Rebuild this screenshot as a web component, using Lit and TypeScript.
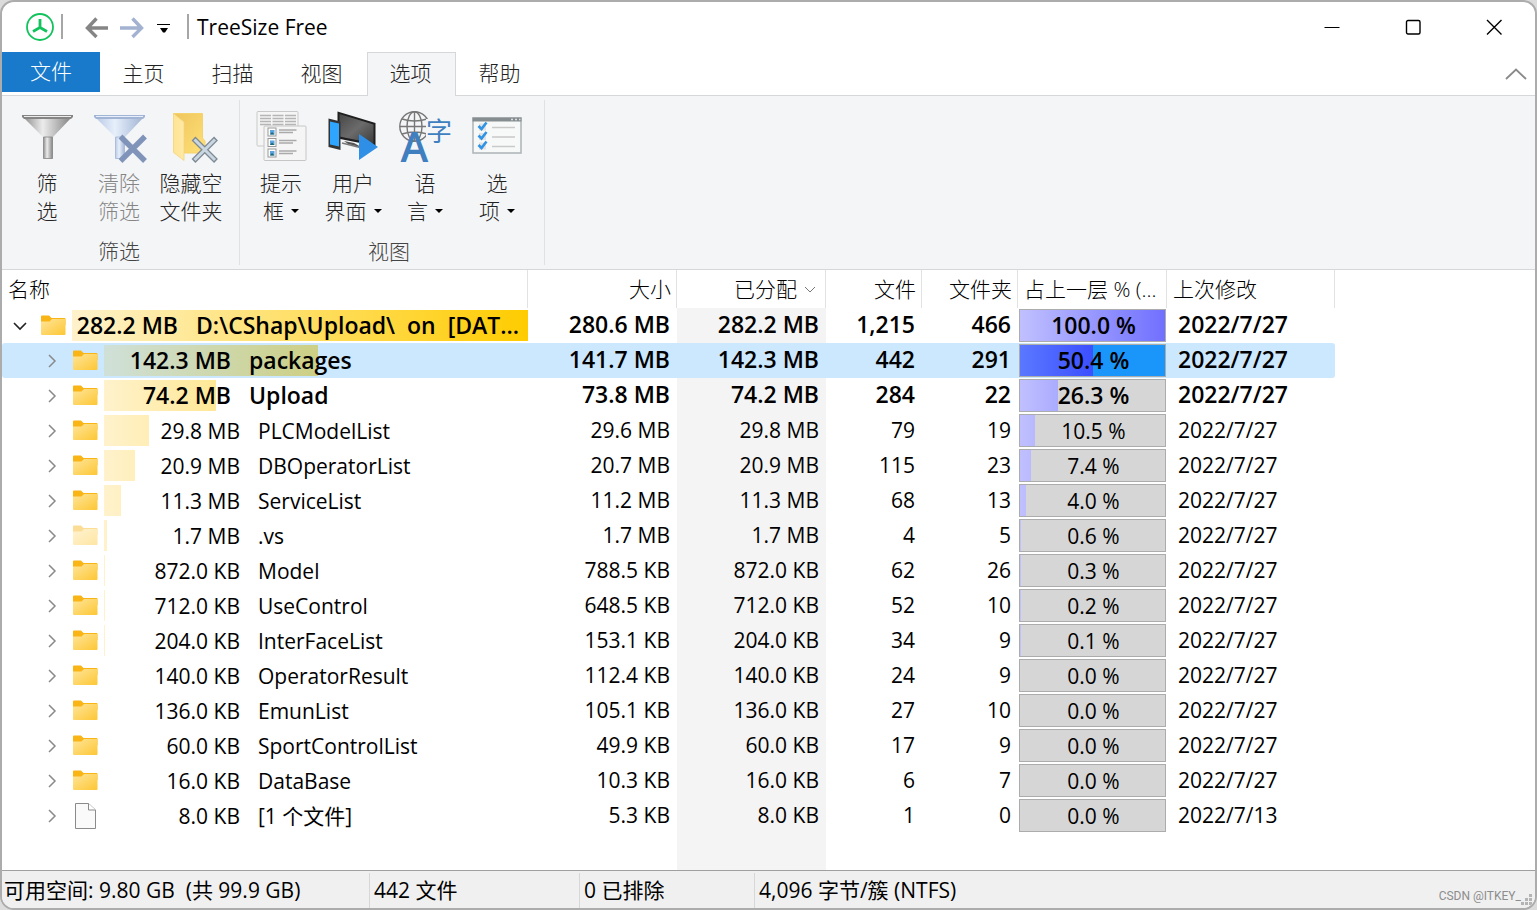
import { LitElement, html, css, svg, nothing } from "lit";
import { customElement, state } from "lit/decorators.js";
import { classMap } from "lit/directives/class-map.js";
import { styleMap } from "lit/directives/style-map.js";

interface Entry {
  name: string;
  level: number;
  label: string;
  size: string;
  allocated: string;
  files: string;
  folders: string;
  percent: number;
  modified: string;
  bold?: boolean;
  icon?: "folder" | "hidden" | "file";
}

const row = (
  name: string,
  size: string,
  allocated: string,
  files: string,
  folders: string,
  percent: number,
  extra: Partial<Entry> = {}
): Entry => ({
  name,
  level: 1,
  label: allocated,
  size,
  allocated,
  files,
  folders,
  percent,
  modified: "2022/7/27",
  ...extra,
});

const ENTRIES: Entry[] = [
  row("D:\\CShap\\Upload\\  on  [DAT...", "280.6 MB", "282.2 MB", "1,215", "466", 100, { level: 0, bold: true }),
  row("packages", "141.7 MB", "142.3 MB", "442", "291", 50.4, { bold: true }),
  row("Upload", "73.8 MB", "74.2 MB", "284", "22", 26.3, { bold: true }),
  row("PLCModelList", "29.6 MB", "29.8 MB", "79", "19", 10.5),
  row("DBOperatorList", "20.7 MB", "20.9 MB", "115", "23", 7.4),
  row("ServiceList", "11.2 MB", "11.3 MB", "68", "13", 4.0),
  row(".vs", "1.7 MB", "1.7 MB", "4", "5", 0.6, { icon: "hidden" }),
  row("Model", "788.5 KB", "872.0 KB", "62", "26", 0.3),
  row("UseControl", "648.5 KB", "712.0 KB", "52", "10", 0.2),
  row("InterFaceList", "153.1 KB", "204.0 KB", "34", "9", 0.1),
  row("OperatorResult", "112.4 KB", "140.0 KB", "24", "9", 0),
  row("EmunList", "105.1 KB", "136.0 KB", "27", "10", 0),
  row("SportControlList", "49.9 KB", "60.0 KB", "17", "9", 0),
  row("DataBase", "10.3 KB", "16.0 KB", "6", "7", 0),
  row("[1 个文件]", "5.3 KB", "8.0 KB", "1", "0", 0, { icon: "file", modified: "2022/7/13" }),
];

const folderIcon = (hidden: boolean) => html`
  <svg width="26" height="26" viewBox="0 0 26 26" opacity=${hidden ? 0.45 : 1} aria-hidden="true">
    <defs>
      <linearGradient id="fg" x1="0" y1="0" x2="1" y2="1">
        <stop offset="0" stop-color="#ffe59a" />
        <stop offset="1" stop-color="#fdc734" />
      </linearGradient>
    </defs>
    <path d="M1 3.5Q1 2.500 2 2.500H9L11.5 5H24.5Q25.5 5 25.5 6V12H1Z" fill="#f9b416" />
    <path d="M1 8.500H9.500L12 6H24.5Q25.5 6 25.5 7V21Q25.5 22 24.5 22H2Q1 22 1 21Z" fill="url(#fg)" />
  </svg>
`;

const fileIcon = html`
  <svg width="26" height="26" viewBox="0 0 26 26" aria-hidden="true">
    <path d="M3.5 .5H16.5L23.5 7V25.5H3.5Z" fill="#fafafa" stroke="#8b8b8b" />
    <path d="M16.5 .5V7H23.5" fill="#fff" stroke="#8b8b8b" />
  </svg>
`;

const funnel = (a: string, b: string, c: string, id: string) => svg`
  <defs>
    <linearGradient id=${id} x1="0" x2="1">
      <stop offset="0" stop-color=${a} />
      <stop offset=".4" stop-color=${b} />
      <stop offset="1" stop-color=${c} />
    </linearGradient>
  </defs>
  <path d="M4 8H51L32.5 27.5V48.5H23.5V27.5Z" fill="url(#${id})" />
  <path d="M23.5 27H32.5V48.5H23.5Z" fill="url(#${id})" stroke=${c} stroke-width=".8" />
  <path d="M2 5H53V7L51 9H4L2 7Z" fill=${c} />
  <path d="M4 6.5H51" stroke=${b} stroke-width="1" />
`;

const picture = (y: number) => svg`
  <rect x="14" y=${y} width="8" height="8" fill="#fff" stroke="#999" />
  <rect x="16" y=${y + 2} width="4.5" height="4.5" fill="#5ba4dd" />
  <path d="M16 ${y + 6.5}L18 ${y + 4}L20.5 ${y + 6.5}Z" fill="#23666b" />
  <path d="M25 ${y + 2}H42.5M25 ${y + 4.5}H39" stroke="#aaa" stroke-width="1.4" />
`;

const tick = (y: number) => svg`
  <rect x="9" y=${y} width="7" height="7" fill="#e2e2e2" />
  <path d="M8.5 ${y + 2.5}L11.5 ${y + 5.5}L16.5 ${y - 1}" fill="none" stroke="#2f93e6" stroke-width="2.6" />
  <path d="M22 ${y + 4}H45" stroke="#c9c9c9" stroke-width="1.3" />
`;

const ICONS: Record<string, unknown> = {
  filter: funnel("#8f8f8f", "#ececec", "#858585", "f1"),
  clear: svg`
    ${funnel("#b9c9e6", "#e6effb", "#a3b5d4", "f2")}
    <path d="M28.5 26.5L53 51M53 26.5L28.5 51" stroke="#8094ba" stroke-width="5.4" />
  `,
  hide: svg`
    <defs>
      <linearGradient id="h1" x1="0" y1="0" x2="1" y2="1">
        <stop offset="0" stop-color="#eec55c" /><stop offset="1" stop-color="#ffe078" />
      </linearGradient>
      <linearGradient id="h2"><stop offset="0" stop-color="#ffe492" /><stop offset="1" stop-color="#ffe9a8" /></linearGradient>
    </defs>
    <path d="M9.500 3.5H38.5V28L41 31V43H19V40Z" fill="url(#h1)" stroke="#f5d36c" />
    <path d="M9.500 3.5L20 12V50.5L9.500 42.5Z" fill="url(#h2)" stroke="#f3d47c" stroke-width=".8" />
    <path d="M29.5 28.500L52 51M52 28.500L29.5 51" stroke="#7d8a93" stroke-width="5.4" />
    <path d="M30.500 29.500L51 50M51 29.500L30.500 50" stroke="#cad7e2" stroke-width="3" />
  `,
  hints: svg`
    <rect x="3" y="1.5" width="41" height="34.5" rx="1" fill="#f5f5f5" stroke="#c9c9c9" />
    <path d="M6 5.5H42M6 8.5H42M6 11.5H42M6 14.5H42" stroke="#b5b5b5" stroke-width="1.3" stroke-dasharray="11 1.5" />
    <rect x="10" y="16" width="42" height="34.5" rx="1" fill="#f5f5f5" stroke="#c6c6c6" />
    ${picture(18)}${picture(28.5)}${picture(39)}
  `,
  ui: svg`
    <defs>
      <linearGradient id="u1" x1="0" y1="0" x2="1" y2="1">
        <stop offset="0" stop-color="#474747" /><stop offset=".5" stop-color="#6b6b6b" /><stop offset="1" stop-color="#3c3c3c" />
      </linearGradient>
    </defs>
    <path d="M18 31L28 33L37 38L22 34Z" fill="#555" />
    <path d="M16 33L36 38" stroke="#777" stroke-width="1.5" />
    <path d="M11.5 1.5L49.5 13V36L11.5 28.5Z" fill="#1f1f1f" />
    <path d="M13.5 4L47.5 14.5V33.5L13.5 26.5Z" fill="url(#u1)" />
    <path d="M2.5 8.5L14.5 11.5V40L2.5 37Z" fill="#333" />
    <path d="M4 11.5L13 13.5V36.5L4 34.5Z" fill="#2fa5ff" />
    <path d="M33 24L52 37L33 50Z" fill="#2f8fe6" />
  `,
  language: svg`
    <g fill="none" stroke="#777" stroke-width="1.4">
      <circle cx="16.5" cy="16.5" r="14.7" />
      <ellipse cx="16.5" cy="16.5" rx="7.500" ry="14.7" />
      <path d="M16.5 2V31M2 16.5H31M4 9Q16.500 13 29 9M4 24Q16.500 20 29 24" />
    </g>
    <rect x="28" y="9" width="26" height="25" fill="#f4f5f7" />
    <text x="16.500" y="51.500" text-anchor="middle" class="glyph-a">A</text>
    <text x="28" y="31" class="glyph-zi">字</text>
  `,
  options: svg`
    <rect x="3" y="8" width="48" height="35" fill="#f7f8f8" stroke="#b1b7ba" stroke-width="1.6" />
    <rect x="2.500" y="7.500" width="49" height="4" fill="#858d90" />
    <path d="M41 9.500H43M45 9.500H47M49 9.500H50.500" stroke="#ddd" stroke-width="1.500" />
    ${tick(13.5)}${tick(23)}${tick(32.5)}
  `,
};

interface Command {
  icon: string;
  lines: [string, string];
  menu?: boolean;
  disabled?: boolean;
}

const GROUPS: { title: string; commands: Command[] }[] = [
  {
    title: "筛选",
    commands: [
      { icon: "filter", lines: ["筛", "选"] },
      { icon: "clear", lines: ["清除", "筛选"], disabled: true },
      { icon: "hide", lines: ["隐藏空", "文件夹"] },
    ],
  },
  {
    title: "视图",
    commands: [
      { icon: "hints", lines: ["提示", "框"], menu: true },
      { icon: "ui", lines: ["用户", "界面"], menu: true },
      { icon: "language", lines: ["语", "言"], menu: true },
      { icon: "options", lines: ["选", "项"], menu: true },
    ],
  },
];

const TABS = ["主页", "扫描", "视图", "选项", "帮助"];

@customElement("app-root")
export class AppRoot extends LitElement {
  @state() private tab = "选项";
  @state() private selected = 1;
  @state() private expanded = true;

  static styles = css`
    :host {
      display: block;
      height: 100vh;
      background: #dcdcdc;
      color: #000;
      font: 21px/28px "Open Sans", "Noto Sans CJK SC", sans-serif;
    }
    * {
      box-sizing: border-box;
    }
    button {
      font: inherit;
      color: inherit;
      border: 0;
      padding: 0;
      background: none;
    }
    .window {
      display: flex;
      flex-direction: column;
      height: 100%;
      border: 2px solid #acacac;
      border-radius: 14px;
      background: #fff;
      overflow: hidden;
    }
    svg {
      display: block;
      flex: none;
      overflow: visible;
    }

    .title-bar {
      display: flex;
      align-items: center;
      height: 50px;
      padding: 0 1px 1px 24px;
    }
    .separator {
      width: 2px;
      height: 25px;
      background: #a6a6a6;
    }
    .quick {
      display: flex;
      align-items: center;
      gap: 12px;
      padding: 0 17px 0 21px;
    }
    .logo {
      margin-right: 7px;
    }
    .title {
      margin: 0;
      padding-left: 8px;
      font-size: 21px;
      font-weight: 400;
      flex: 1;
    }
    .caption {
      display: grid;
      place-items: center;
      width: 81px;
      height: 48px;
    }

    .tabs {
      display: flex;
      height: 44px;
      border-bottom: 1px solid #d5d7d9;
      color: #222;
      font-weight: 300;
    }
    .file-tab {
      width: 98px;
      height: 40px;
      padding-bottom: 2px;
      background: #1979ca;
      color: #fff;
    }
    .tab {
      width: 89px;
      height: 44px;
      padding: 0 2px 4px 0;
      border: 1px solid transparent;
      border-bottom: 0;
    }
    .tab.active {
      background: #f4f5f7;
      border-color: #d5d7d9;
    }
    .collapse {
      display: grid;
      place-items: center;
      width: 38px;
      margin-left: auto;
    }

    .ribbon {
      display: flex;
      background: #f4f5f7;
      border-bottom: 1px solid #d5d7d9;
      padding: 4px 0;
      color: #222;
      font-weight: 300;
    }
    .group {
      display: flex;
      flex-direction: column;
      gap: 13px;
      padding: 10px 12px 0 9px;
      border-right: 1px solid #dfe1e3;
    }
    .group + .group {
      padding: 10px 11px 0 5px;
    }
    .commands {
      display: flex;
    }
    .command {
      display: flex;
      flex-direction: column;
      align-items: center;
      gap: 5px;
      width: 72px;
    }
    .command:disabled {
      color: #858585;
    }
    .command-text {
      display: block;
      white-space: nowrap;
    }
    .line {
      display: flex;
      align-items: center;
      justify-content: center;
      gap: 7px;
    }
    .group-title {
      text-align: center;
      line-height: 27px;
      color: #444;
    }
    .glyph-a {
      font: 600 42px "Open Sans", sans-serif;
      fill: #3f7fbf;
    }
    .glyph-zi {
      font: 400 26px "Noto Sans CJK SC", sans-serif;
      fill: #3f7fbf;
    }

    .list {
      flex: 1;
      min-height: 0;
      overflow: hidden;
    }
    table {
      height: 100%;
      width: 1333px;
      table-layout: fixed;
      border-collapse: separate;
      border-spacing: 0;
    }
    .c-name { width: 526px; }
    .c-size { width: 149px; }
    .c-count { width: 96px; }
    .c-date { width: 168px; }
    th {
      height: 38px;
      padding: 0 4px 0 6px;
      text-align: left;
      font-weight: 300;
      white-space: nowrap;
      border-right: 1px solid #e2e2e2;
    }
    td {
      height: 35px;
      padding: 0;
      white-space: nowrap;
    }
    tr.bold {
      font-weight: 600;
      font-size: 23px;
    }
    th.number {
      text-align: right;
      padding-right: 5px;
    }
    td.number {
      text-align: right;
      padding: 0 7px 2px 0;
    }
    .bold td.number,
    .bold td.date {
      padding-bottom: 4px;
    }
    .allocated {
      background: #f4f4f4;
    }
    .sort {
      display: flex;
      align-items: center;
      justify-content: flex-end;
      gap: 7px;
      padding-right: 5px;
    }
    .date {
      padding: 0 0 2px 11px;
    }
    tr.selected td {
      background: #cce8ff;
    }
    tr.selected td:last-child {
      border-radius: 0 3px 3px 0;
    }
    tr.selected td:first-child {
      border-radius: 3px 0 0 3px;
    }
    tr.filler td {
      height: auto;
    }
    .node {
      display: flex;
      align-items: center;
      height: 35px;
      padding-left: 6px;
    }
    .node.child {
      padding-left: 38px;
    }
    .toggle {
      display: grid;
      place-items: center;
      width: 24px;
      height: 24px;
      margin-right: 8px;
    }
    .track {
      flex: 1;
      min-width: 0;
      display: grid;
      align-items: center;
      margin-left: 6px;
      height: 31px;
    }
    .fill,
    .node-text {
      grid-area: 1 / 1;
    }
    .fill {
      height: 31px;
      overflow: hidden;
      background: linear-gradient(90deg, #fff2cc, #ffcc00) 0 0 / 423px 100% no-repeat;
    }
    .root .fill {
      background-size: 100% 100%;
    }
    .selected .fill {
      background-image: linear-gradient(90deg, #cfe0d8, #cabf32);
    }
    .node-text {
      display: flex;
      gap: 18px;
      white-space: pre;
    }
    .bold .node-text,
    .bold .percent-text {
      padding-bottom: 2px;
    }
    .node-size {
      width: 136px;
      text-align: right;
    }
    .bold .node-size {
      width: 127px;
    }
    .root .node-size {
      width: 106px;
    }
    .percent {
      display: grid;
      align-items: center;
      margin: 0 1px;
      height: 33px;
      border: 1px solid #acacac;
      background: #d6d6d6;
      text-align: center;
    }
    .share,
    .percent-text {
      grid-area: 1 / 1;
    }
    .percent-text {
      padding-left: 2px;
    }
    .share {
      height: 31px;
      background: linear-gradient(90deg, #c0c0ff, #7070ff) 0 0 / 145px 100% no-repeat;
    }
    .selected .percent {
      background: #1a96fa;
    }
    .selected .share {
      background-image: linear-gradient(90deg, #5a78ff, #1e28ff);
    }

    .status {
      display: flex;
      align-items: stretch;
      height: 38px;
      padding-top: 2px;
      background: #f0f0f0;
      border-top: 1px solid #a0a0a0;
      line-height: 35px;
      white-space: pre;
    }
    .status-cell {
      padding-left: 4px;
      border-right: 1px solid #d7d7d7;
    }
    .s-space { width: 368px; padding-left: 2px; }
    .s-files { width: 210px; }
    .s-excluded { width: 175px; }
    .s-cluster { flex: 1; border: 0; }
    .credit {
      align-self: flex-end;
      color: #8d8d8d;
      font: 12px/24px Roboto, sans-serif;
    }
    .grip {
      align-self: flex-end;
      margin: 0 2px 2px 0;
    }
  `;

  private titleBar() {
    return html`
      <header class="title-bar">
        <svg class="logo" width="28" height="28" viewBox="0 0 28 28" fill="none" stroke="#12c35d" aria-hidden="true">
          <circle cx="14" cy="14" r="13" stroke-width="1.8" />
          <path d="M14 6V14.500L7 18.500M14 14.500L21 18.500" stroke-width="2.800" />
        </svg>
        <span class="separator"></span>
        <nav class="quick">
          <button aria-label="后退">
            <svg width="24" height="22" viewBox="0 0 24 22" fill="none" stroke="#858585" stroke-width="3.400">
              <path d="M24 12H3.500M12.500 2.500L3.500 12L12.500 21" />
            </svg>
          </button>
          <button aria-label="前进">
            <svg width="24" height="22" viewBox="0 0 24 22" fill="none" stroke="#a3b2d0" stroke-width="3.400">
              <path d="M0 12H21.500M12.500 2.500L21.500 12L12.500 21" />
            </svg>
          </button>
          <button aria-label="自定义快速访问工具栏">
            <svg width="14" height="12" viewBox="0 0 14 12">
              <path d="M1 3H14V4H1ZM4 7H12L9 11.500H7Z" />
            </svg>
          </button>
        </nav>
        <span class="separator"></span>
        <h1 class="title">TreeSize Free</h1>
        <button class="caption" aria-label="最小化">
          <svg width="16" height="16" viewBox="0 0 16 16"><path d="M.5 8.500H15.500" stroke="#000" /></svg>
        </button>
        <button class="caption" aria-label="最大化">
          <svg width="16" height="16" viewBox="0 0 16 16">
            <rect x="1.500" y="1.500" width="13.500" height="13.500" rx="1.500" fill="none" stroke="#000" stroke-width="1.400" />
          </svg>
        </button>
        <button class="caption" aria-label="关闭">
          <svg width="16" height="16" viewBox="0 0 16 16">
            <path d="M1 1L15.500 15.500M15.500 1L1 15.500" stroke="#000" stroke-width="1.400" />
          </svg>
        </button>
      </header>
    `;
  }

  private tabStrip() {
    return html`
      <nav class="tabs">
        <button class="file-tab">文件</button>
        ${TABS.map(
          (t) => html`
            <button class=${classMap({ tab: true, active: t === this.tab })} @click=${() => (this.tab = t)}>${t}</button>
          `
        )}
        <button class="collapse" aria-label="折叠功能区">
          <svg width="22" height="12" viewBox="0 0 22 12">
            <path d="M1 11L11 1.500L21 11" fill="none" stroke="#8a8a8a" stroke-width="1.800" />
          </svg>
        </button>
      </nav>
    `;
  }

  private ribbon() {
    return html`
      <section class="ribbon">
        ${GROUPS.map(
          (g) => html`
            <div class="group">
              <div class="commands">
                ${g.commands.map(
                  (c) => html`
                    <button class="command" ?disabled=${c.disabled}>
                      <svg width="54" height="54" viewBox="0 0 54 54" aria-hidden="true">${ICONS[c.icon]}</svg>
                      <span class="command-text">
                        <span class="line">${c.lines[0]}</span>
                        <span class="line"
                          >${c.lines[1]}${c.menu
                            ? html`<svg width="8" height="4" viewBox="0 0 8 4"><path d="M0 0H8L4 4Z" fill="#000" /></svg>`
                            : nothing}</span
                        >
                      </span>
                    </button>
                  `
                )}
              </div>
              <div class="group-title">${g.title}</div>
            </div>
          `
        )}
      </section>
    `;
  }

  private chevron(open: boolean) {
    return open
      ? html`<svg width="14" height="8" viewBox="0 0 14 8">
          <path d="M1 1L7 7L13 1" fill="none" stroke="#222" stroke-width="1.600" />
        </svg>`
      : html`<svg width="8" height="14" viewBox="0 0 8 14">
          <path d="M1 1L7 7L1 13" fill="none" stroke="#8a8a8a" stroke-width="1.500" />
        </svg>`;
  }

  private entry(e: Entry, i: number) {
    const root = e.level === 0;
    const pct = e.percent.toFixed(1);
    return html`
      <tr
        class=${classMap({ bold: !!e.bold, selected: i === this.selected })}
        @click=${() => (this.selected = i)}
      >
        <td>
          <div class=${classMap({ node: true, root, child: !root })}>
            <button
              class="toggle"
              aria-label="展开或折叠"
              @click=${() => {
                if (root) this.expanded = !this.expanded;
              }}
            >
              ${this.chevron(root && this.expanded)}
            </button>
            ${e.icon === "file" ? fileIcon : folderIcon(e.icon === "hidden")}
            <div class="track">
              <div class="fill" style=${styleMap({ width: `${e.percent}%` })}></div>
              <div class="node-text"><span class="node-size">${e.label}</span><span>${e.name}</span></div>
            </div>
          </div>
        </td>
        <td class="number">${e.size}</td>
        <td class="number allocated">${e.allocated}</td>
        <td class="number">${e.files}</td>
        <td class="number">${e.folders}</td>
        <td>
          <div class="percent">
            <div class="share" style=${styleMap({ width: `${e.percent}%` })}></div>
            <div class="percent-text">${pct} %</div>
          </div>
        </td>
        <td class="date">${e.modified}</td>
      </tr>
    `;
  }

  render() {
    const visible = this.expanded ? ENTRIES : ENTRIES.slice(0, 1);
    return html`
      <div class="window">
        ${this.titleBar()} ${this.tabStrip()} ${this.ribbon()}
        <main class="list">
          <table>
            <colgroup>
              <col class="c-name" />
              <col class="c-size" />
              <col class="c-size" />
              <col class="c-count" />
              <col class="c-count" />
              <col class="c-size" />
              <col class="c-date" />
            </colgroup>
            <thead>
              <tr>
                <th>名称</th>
                <th class="number">大小</th>
                <th>
                  <div class="sort">
                    已分配
                    <svg width="12" height="7" viewBox="0 0 12 7">
                      <path d="M1 1L6 6L11 1" fill="none" stroke="#777" />
                    </svg>
                  </div>
                </th>
                <th class="number">文件</th>
                <th class="number">文件夹</th>
                <th>占上一层 % (...</th>
                <th>上次修改</th>
              </tr>
            </thead>
            <tbody>
              ${visible.map((e, i) => this.entry(e, i))}
              <tr class="filler">
                <td></td>
                <td></td>
                <td class="allocated"></td>
                <td colspan="4"></td>
              </tr>
            </tbody>
          </table>
        </main>
        <footer class="status">
          <div class="status-cell s-space">可用空间: 9.80 GB  (共 99.9 GB)</div>
          <div class="status-cell s-files">442 文件</div>
          <div class="status-cell s-excluded">0 已排除</div>
          <div class="status-cell s-cluster">4,096 字节/簇 (NTFS)</div>
          <div class="credit">CSDN @ITKEY_</div><svg class="grip" width="12" height="12" viewBox="0 0 12 12" fill="#b4b4b4">
            <path d="M8 0H11V3H8ZM4 4H7V7H4ZM8 4H11V7H8ZM0 8H3V11H0ZM4 8H7V11H4ZM8 8H11V11H8Z" />
          </svg>
        </footer>
      </div>
    `;
  }
}
